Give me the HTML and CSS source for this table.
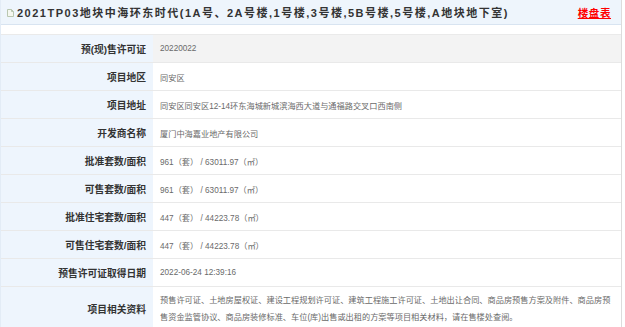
FILE: index.html
```html
<!DOCTYPE html>
<html lang="zh-CN">
<head>
<meta charset="utf-8">
<link rel="stylesheet" href="styles.css">
</head>
<body>
<div class="page">
  <div class="head">
    <div class="title">
      <svg class="doc" width="7" height="8" viewBox="0 0 7 8"><path d="M0.5 0.5h4l2 2v5h-6z" fill="#f4f7f0" stroke="#b9c7b0"/><path d="M4.5 0.5v2h2" fill="none" stroke="#b9c7b0"/></svg>
      <span class="name">2021TP03地块中海环东时代(1A号、2A号楼,1号楼,3号楼,5B号楼,5号楼,A地块地下室)</span>
    </div>
    <a class="link">楼盘表</a>
  </div>
  <div class="table">
    <div class="row hover"><div class="label">预(现)售许可证</div><div class="value">20220022</div></div>
    <div class="row"><div class="label">项目地区</div><div class="value">同安区</div></div>
    <div class="row"><div class="label">项目地址</div><div class="value">同安区同安区12-14环东海城新城滨海西大道与通福路交叉口西南侧</div></div>
    <div class="row"><div class="label">开发商名称</div><div class="value">厦门中海嘉业地产有限公司</div></div>
    <div class="row"><div class="label">批准套数/面积</div><div class="value">961（套） / 63011.97（㎡）</div></div>
    <div class="row"><div class="label">可售套数/面积</div><div class="value">961（套） / 63011.97（㎡）</div></div>
    <div class="row"><div class="label">批准住宅套数/面积</div><div class="value">447（套） / 44223.78（㎡）</div></div>
    <div class="row"><div class="label">可售住宅套数/面积</div><div class="value">447（套） / 44223.78（㎡）</div></div>
    <div class="row"><div class="label">预售许可证取得日期</div><div class="value">2022-06-24 12:39:16</div></div>
    <div class="row tall"><div class="label">项目相关资料</div><div class="value multi">预售许可证、土地房屋权证、建设工程规划许可证、建筑工程施工许可证、土地出让合同、商品房预售方案及附件、商品房预售资金监管协议、商品房装修标准、车位(库)出售或出租的方案等项目相关材料，请在售楼处查阅。</div></div>
  </div>
</div>
</body>
</html>
```
FILE: styles.css
```css
html, body {
  margin: 0;
  padding: 0;
  background: #fff;
}
body {
  font-family: "Liberation Sans", "Noto Sans CJK SC", sans-serif;
  color: #333;
}
.page {
  border-right: 1px solid #dcdcdc;
  border-left: 1px solid #e3ecf6;
  box-sizing: border-box;
  width: 622px;
}
.head {
  height: 24px;
  background: #eef5fc;
  border-bottom: 1px solid #d8e4f1;
  display: flex;
  align-items: center;
  justify-content: space-between;
  padding: 0 10px 0 6px;
}
.title {
  display: flex;
  align-items: center;
  gap: 3px;
}
.doc {
  display: block;
  margin-top: 1px;
}
.name {
  font-size: 11px;
  font-weight: bold;
  letter-spacing: 1.5px;
  color: #333;
}
.link {
  font-size: 10.5px;
  font-weight: bold;
  color: #f00;
  text-decoration: underline;
  letter-spacing: 0.6px;
}
.table {
  margin-top: 9px;
  border-top: 1px solid #eaeaea;
}
.row {
  display: grid;
  grid-template-columns: 152px 1fr;
  border-bottom: 1px solid #e9e9e9;
  min-height: 27px;
}
.label {
  background: #eef5fd;
  text-align: right;
  font-weight: bold;
  font-size: 9.75px;
  color: #333;
  padding-right: 7px;
  display: flex;
  align-items: center;
  justify-content: flex-end;
}
.value {
  font-size: 8.2px;
  color: #6a6a6a;
  padding-left: 7px;
  display: flex;
  align-items: center;
}
.hover .value {
  background: #f3f3f3;
}
.tall .value.multi {
  display: block;
  line-height: 17px;
  padding: 5px 8px 5px 7px;
}
```
